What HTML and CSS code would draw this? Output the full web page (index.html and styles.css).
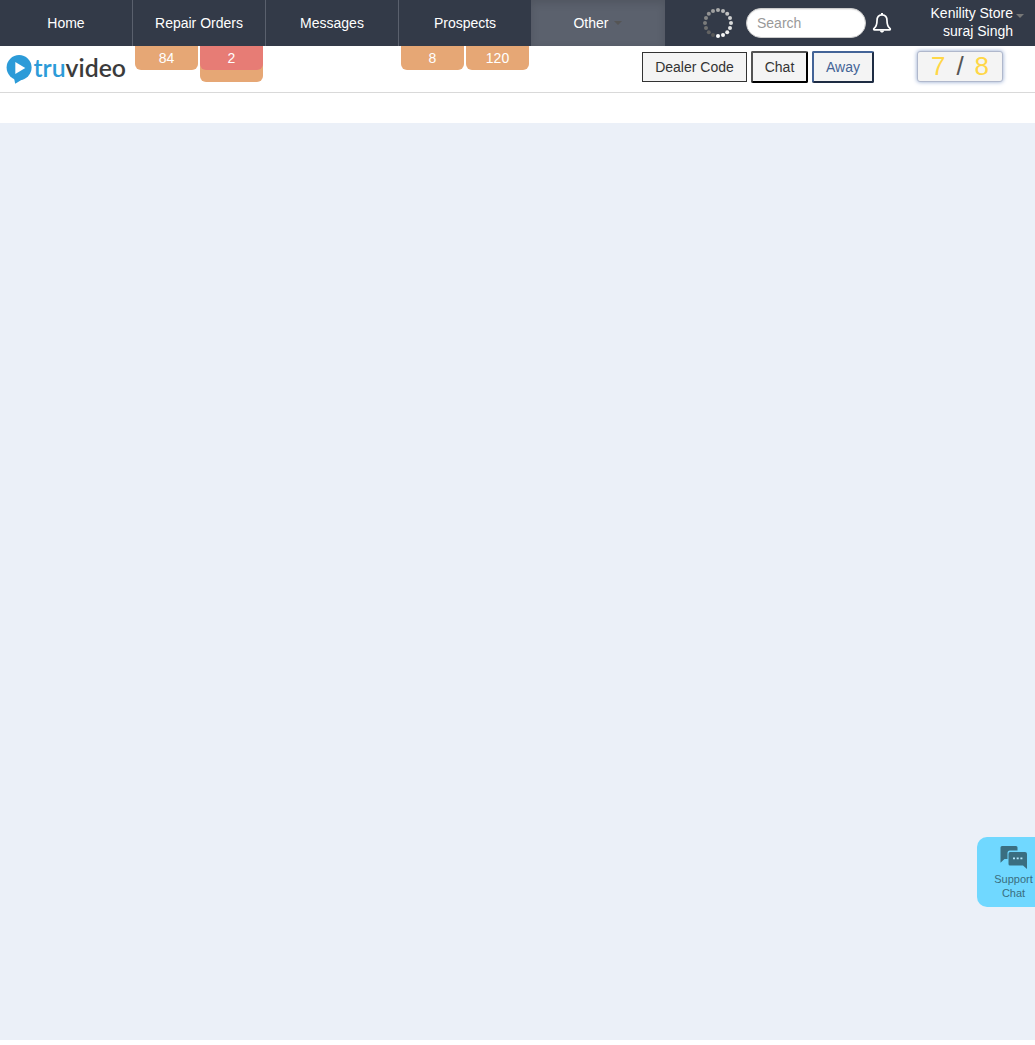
FILE: index.html
```html
<!DOCTYPE html>
<html lang="en">
<head>
<meta charset="utf-8">
<title>TruVideo</title>
<link rel="stylesheet" href="styles.css">
</head>
<body>
<header class="navbar">
  <nav class="menu">
    <a class="item">Home</a>
    <a class="item">Repair Orders</a>
    <a class="item">Messages</a>
    <a class="item">Prospects</a>
    <a class="item active">Other<span class="caret"></span></a>
  </nav>
  <svg class="spinner" width="32" height="32" viewBox="-16 -16 32 32">
    <circle cx="0" cy="13" r="2" fill="#fff"/>
    <circle cx="5" cy="12" r="2" fill="#f6f6f6"/>
    <circle cx="9.2" cy="9.2" r="2" fill="#eee"/>
    <circle cx="12" cy="5" r="2" fill="#e4e4e4"/>
    <circle cx="13" cy="0" r="2" fill="#dadada"/>
    <circle cx="12" cy="-5" r="2" fill="#cfcfcf"/>
    <circle cx="9.2" cy="-9.2" r="2" fill="#c3c3c3"/>
    <circle cx="5" cy="-12" r="2" fill="#b7b7b7"/>
    <circle cx="0" cy="-13" r="2" fill="#ababab"/>
    <circle cx="-5" cy="-12" r="2" fill="#9f9f9f"/>
    <circle cx="-9.2" cy="-9.2" r="2" fill="#939393"/>
    <circle cx="-12" cy="-5" r="2" fill="#878787"/>
    <circle cx="-13" cy="0" r="2" fill="#7b7b7b"/>
    <circle cx="-12" cy="5" r="2" fill="#6f6f6f"/>
    <circle cx="-9.2" cy="9.2" r="2" fill="#636363"/>
    <circle cx="-5" cy="12" r="2" fill="#585858"/>
  </svg>
  <input class="search" type="text" placeholder="Search">
  <svg class="bell" width="20" height="22" viewBox="0 0 20 22">
    <path d="M10 2.8C6.2 2.8 5 5.6 5 8.7c0 4.6-1.3 6.3-2.9 7.6-.7.6-.5 1.5.4 1.5h15c.9 0 1.1-.9.4-1.5-1.6-1.3-2.9-3-2.9-7.6 0-3.1-1.200-5.900-5-5.900z" fill="none" stroke="#fff" stroke-width="1.7"/>
    <path d="M9 1h2v2H9zM7.800 18.500h4.400c-.4 1.500-1.200 2-2.200 2s-1.800-.5-2.200-2z" fill="#fff"/>
  </svg>
  <div class="account"><span>Kenility Store<br>suraj Singh</span><i class="caret"></i></div>
</header>
<div class="toolbar">
  <svg class="logo" width="133" height="46" viewBox="0 0 133 46">
    <circle cx="19.100" cy="21.600" r="12.500" fill="#2c9bd8"/>
    <path d="M14 32l1.200 5.700L23 33z" fill="#2c9bd8"/>
    <path d="M15.300 16v12l10-6z" fill="#fff"/>
    <text class="wordmark" x="33.500" y="30.700" textLength="92.500" lengthAdjust="spacingAndGlyphs"><tspan fill="#2c9bd8">tru</tspan><tspan fill="#3b3b3b">video</tspan></text>
  </svg>
  <div class="counts">
    <span class="count">84</span>
    <div class="stack"><span class="count urgent">2</span></div>
  </div>
  <div class="counts"></div>
  <div class="counts">
    <span class="count">8</span>
    <span class="count">120</span>
  </div>
  <div class="actions">
    <button class="btn dealer">Dealer Code</button>
    <button class="btn chat">Chat</button>
    <button class="btn away">Away</button>
    <div class="score"><b>7</b><span>/</span><b>8</b></div>
  </div>
</div>
<main class="content"></main>
<aside class="support">
  <svg width="28" height="25" viewBox="0 0 28 25">
    <path d="M2 1h14a1.500 1.500 0 0 1 1.500 1.500V5.500H10Q7.500 5.500 7.500 8V14H4.500l-4 3.800V2.500Q.5 1 2 1z" fill="#3a6e80"/>
    <path d="M10 7h15q2 0 2 2v15L23 20.500H10q-1.500 0-1.500-1.500V9q0-2 1.500-2z" fill="#3a6e80"/>
    <path d="M13 12.500h2v1.700h-2zM16.700 12.500h2v1.700h-2zM20.400 12.500h2v1.700h-2z" fill="#b5e9fb"/>
  </svg>
  <span>Support<br>Chat</span>
</aside>
</body>
</html>
```
FILE: styles.css
```css
* { box-sizing: border-box; }
body {
  margin: 0;
  min-height: 100vh;
  display: flex;
  flex-direction: column;
  overflow: hidden;
  background: #fff;
  color: #333;
  font: 14px/18px "Liberation Sans", Arial, sans-serif;
}
.navbar {
  display: flex;
  align-items: center;
  height: 46px;
  background: #333a48;
  color: #fff;
}
.menu { display: flex; }
.item {
  width: 133px;
  height: 46px;
  line-height: 46px;
  text-align: center;
  border-right: 1px solid #5a606d;
}
.item:nth-child(4) { border-right: 0; width: 132px; }
.item.active {
  width: 134px;
  padding-right: 1px;
  background: #5b616d;
  border: 0;
  box-shadow: inset 0 3px 8px rgba(0, 0, 0, .125);
}
.caret {
  display: inline-block;
  border: 4px solid transparent;
  border-top-color: #777;
  border-bottom: 0;
}
.item .caret { margin-left: 5px; vertical-align: 3px; border-top-color: #555; }
.spinner { margin-left: 37px; }
.search {
  width: 120px;
  height: 30px;
  margin-left: 12px;
  padding: 0 10px;
  border: 1px solid #ccc;
  border-radius: 15px;
  background: #fff;
  box-shadow: inset 0 1px 1px rgba(0, 0, 0, .075);
  font: inherit;
}
.search::placeholder { color: #999; }
.bell { margin-left: 6px; }
.account {
  display: flex;
  margin-left: auto;
  margin-right: 11px;
  padding-bottom: 2px;
  gap: 3px;
  text-align: right;
}
.account .caret { margin-top: 10px; }
.toolbar {
  display: flex;
  height: 47px;
  border-bottom: 1px solid #d9d9d9;
}
.wordmark { font: 600 24.5px Lato, sans-serif; }
.counts {
  display: flex;
  align-items: flex-start;
  gap: 2px;
  width: 133px;
  padding-left: 2px;
}
.count {
  width: 63px;
  height: 24px;
  line-height: 24px;
  text-align: center;
  color: #fff;
  background: #e6a775;
  border-radius: 0 0 6px 6px;
}
.urgent { display: block; background: #e77c75; }
.stack {
  height: 36px;
  background: #e6a775;
  border-radius: 0 0 6px 6px;
}
.actions {
  display: flex;
  align-items: flex-start;
  gap: 4px;
  margin-left: auto;
  margin-right: 32px;
  padding-top: 5px;
}
.btn {
  height: 32px;
  padding: 0;
  background: #f4f4f4;
  color: #333;
  font: inherit;
}
.dealer { width: 105px; height: 30px; margin-top: 1px; border: 1px solid #333; }
.chat { width: 57px; border: 2px outset #000; border-radius: 2px; }
.away { width: 62px; border: 2px outset #446497; border-radius: 2px; color: #446497; }
.score {
  display: flex;
  justify-content: center;
  gap: 11px;
  width: 86px;
  height: 31px;
  margin-left: 39px;
  border: 1px solid #b0b8cc;
  border-radius: 3px;
  background: #f4f4f4;
  box-shadow: 0 0 4px #8fa5cd;
  color: #555;
  font-size: 26px;
  line-height: 28px;
}
.score b { font-weight: 400; color: #ffd747; }
.content { flex: 1; margin: 30px 0 5px; background: #ebf0f8; }
.support {
  position: fixed;
  right: 0;
  top: 837px;
  display: flex;
  flex-direction: column;
  align-items: center;
  width: 58px;
  height: 70px;
  padding: 8px 0 0 15px;
  border-radius: 10px 0 0 10px;
  background: #70d8ff;
  color: #3a6e80;
  font-size: 11px;
  line-height: 14px;
  text-align: center;
}
.support span { margin-top: 2px; }
```
